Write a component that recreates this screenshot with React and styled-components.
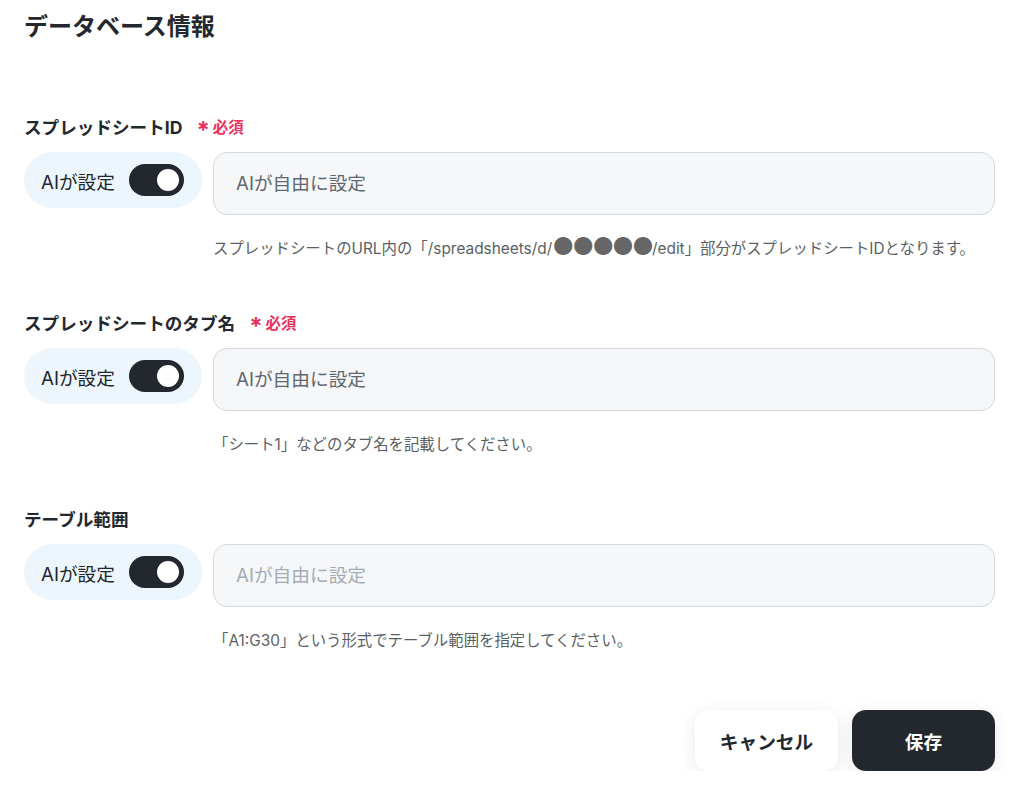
import React from "react";
import styled, { createGlobalStyle } from "styled-components";

const DARK = "#23272e";
const RED = "#e8305c";

const GlobalStyle = createGlobalStyle`
  body {
    margin: 0;
    background: #fff;
    font-family: Inter, "Noto Sans CJK JP", sans-serif;
    color: ${DARK};
  }
`;

const Page = styled.div`
  padding: 12px 29px 0 24px;
`;

const Title = styled.h1`
  margin: 0 0 72px;
  font-size: 24px;
  line-height: 30px;
  font-weight: 700;
`;

const Section = styled.div`
  margin-bottom: 51px;
`;

const LabelRow = styled.div`
  display: flex;
  align-items: center;
  gap: 14px;
  height: 24px;
  margin-bottom: 14px;
`;

const Label = styled.span`
  font-size: 17.6px;
  font-weight: 700;
`;

const Required = styled.span`
  display: flex;
  align-items: center;
  gap: 3px;
  color: ${RED};
  font-size: 15.4px;
  font-weight: 700;
`;

const Star = styled.span`
  font-size: 24px;
  line-height: 1;
  margin-top: 9px;
`;

const Row = styled.div`
  display: flex;
  align-items: flex-start;
  gap: 11px;
`;

const AiPill = styled.div`
  flex: none;
  display: flex;
  align-items: center;
  gap: 14px;
  height: 56px;
  width: 178px;
  box-sizing: border-box;
  padding: 0 17px;
  border-radius: 28px;
  background: #edf5fd;
  font-size: 18.7px;
`;

const Track = styled.span`
  position: relative;
  flex: none;
  width: 55px;
  height: 32px;
  border-radius: 16px;
  background: ${DARK};
`;

const Knob = styled.span`
  position: absolute;
  top: 5px;
  right: 5px;
  width: 22px;
  height: 22px;
  border-radius: 50%;
  background: #fff;
`;

const Field = styled.input`
  flex: 1;
  height: 63px;
  box-sizing: border-box;
  padding: 0 22px;
  border: 1px solid #d3d9e0;
  border-radius: 14px;
  background: #f5f7f9;
  font-family: inherit;
  font-size: 18.7px;
  outline: none;
  &::placeholder {
    color: ${p => (p.$muted ? "#a4acb5" : "#5f6770")};
  }
`;

const Help = styled.p`
  margin: 24px 0 0 189px;
  font-size: 15.4px;
  line-height: 20px;
  color: #5a5f66;
`;

const Dots = styled.span`
  color: #666;
  font-size: 24px;
  line-height: 0;
  letter-spacing: -2px;
  vertical-align: -1px;
`;

const Actions = styled.div`
  display: flex;
  justify-content: flex-end;
  gap: 14px;
  margin-top: 59px;
`;

const Button = styled.button`
  width: 143px;
  height: 61px;
  border: none;
  border-radius: 14px;
  font-family: inherit;
  font-size: 18.7px;
  font-weight: 700;
  background: ${p => (p.$primary ? DARK : "#fff")};
  color: ${p => (p.$primary ? "#fff" : DARK)};
  box-shadow: 0 4px 18px rgba(0, 0, 0, 0.09);
`;

const fields = [
  {
    label: "スプレッドシートID",
    required: true,
    help: (
      <>
        スプレッドシートのURL内の「/spreadsheets/d/<Dots>●●●●●</Dots>/edit」部分がスプレッドシートIDとなります。
      </>
    )
  },
  {
    label: "スプレッドシートのタブ名",
    required: true,
    help: "「シート1」などのタブ名を記載してください。"
  },
  {
    label: "テーブル範囲",
    required: false,
    muted: true,
    help: "「A1:G30」という形式でテーブル範囲を指定してください。"
  }
];

export default function App() {
  return (
    <>
      <GlobalStyle />
      <Page>
        <Title>データベース情報</Title>
        {fields.map(f => (
          <Section key={f.label}>
            <LabelRow>
              <Label>{f.label}</Label>
              {f.required && (
                <Required>
                  <Star>*</Star>必須
                </Required>
              )}
            </LabelRow>
            <Row>
              <AiPill>
                AIが設定
                <Track>
                  <Knob />
                </Track>
              </AiPill>
              <Field placeholder="AIが自由に設定" $muted={f.muted} />
            </Row>
            <Help>{f.help}</Help>
          </Section>
        ))}
        <Actions>
          <Button>キャンセル</Button>
          <Button $primary>保存</Button>
        </Actions>
      </Page>
    </>
  );
}
